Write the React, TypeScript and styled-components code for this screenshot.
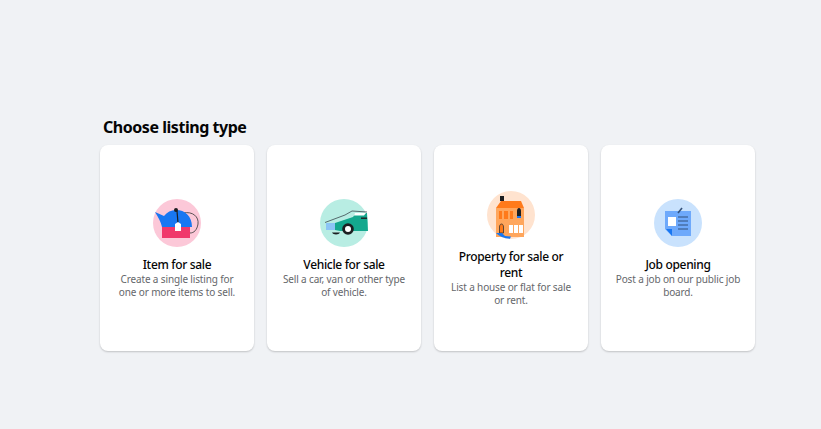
import { ReactNode } from "react";
import styled, { createGlobalStyle } from "styled-components";

const GlobalStyle = createGlobalStyle`
  html, body {
    margin: 0;
    padding: 0;
    background: #f0f2f5;
    font-family: "Noto Sans", "Open Sans", sans-serif;
  }
`;

const Page = styled.div`
  box-sizing: border-box;
  width: 821px;
  height: 429px;
  padding: 117px 0 0 100px;
  background: #f0f2f5;
  overflow: hidden;
`;

const Heading = styled.h1`
  margin: 0 0 7px 3px;
  font-size: 16px;
  line-height: 21px;
  font-weight: 700;
  letter-spacing: -0.46px;
  color: #050505;
`;

const Cards = styled.div`
  display: flex;
  gap: 13px;
`;

const Card = styled.div`
  box-sizing: border-box;
  width: 154px;
  height: 206px;
  padding: 2px 12px 0;
  display: flex;
  flex-direction: column;
  align-items: center;
  justify-content: center;
  text-align: center;
  background: #fff;
  border-radius: 8px;
  box-shadow: 0 1px 2px rgba(0, 0, 0, 0.2);
`;

const IconWrap = styled.div`
  width: 48px;
  height: 48px;
  margin-bottom: 10px;

  svg {
    display: block;
  }
`;

const Title = styled.div`
  max-width: 122px;
  font-size: 12px;
  line-height: 16px;
  font-weight: 500;
  letter-spacing: -0.33px;
  color: #050505;
`;

const Description = styled.div`
  margin-bottom: 1px;
  font-size: 10px;
  line-height: 13px;
  letter-spacing: -0.14px;
  color: #65676b;
`;

const TeapotIcon = () => (
  <svg width="48" height="48" viewBox="0 0 48 48">
    <circle cx="24" cy="24" r="24" fill="#fcc8d8" />
    <path d="M30 14 C40 12 46 18 45 25 C44 31 41 34 37 34" fill="none" stroke="#333" strokeWidth="0.8" />
    <path d="M2 13 L11 17 C14 13 18 11 23 11 C32 11 39 17 39 28 H9 C8 23 5 18 2 13 Z" fill="#1877f2" />
    <rect x="9" y="28" width="28" height="11" fill="#f0386b" />
    <circle cx="23" cy="11" r="2" fill="#1c1e21" />
    <path d="M24 12 L25 24" stroke="#1c1e21" strokeWidth="1.2" />
    <path d="M25 23 L28 25 V32 H22 V25 Z" fill="#fff" />
  </svg>
);

const CarIcon = () => (
  <svg width="48" height="48" viewBox="0 0 48 48">
    <circle cx="24" cy="24" r="24" fill="#b8ede3" />
    <path d="M15 24 L33 18 L36 14 H47 L48 32 H20 L15 31 Z" fill="#14a88e" />
    <path d="M5 23.5 L25 16 L32 12 L47 13" fill="none" stroke="#4a5a5f" strokeWidth="0.9" />
    <path d="M35 14 H46 L44 16.5 H34 Z" fill="#fff" />
    <path d="M6 24 L15 24 V31 H6 Z" fill="#8cc4f5" />
    <path d="M12 33.5 H20 C19 36 13 36 12 33.5 Z" fill="#1c1e21" />
    <circle cx="28" cy="30" r="5.8" fill="#1c1e21" />
    <circle cx="28" cy="30" r="3" fill="#fff" />
    <rect x="41" y="18.5" width="6" height="1.4" fill="#1c1e21" />
  </svg>
);

const HouseIcon = () => (
  <svg width="48" height="48" viewBox="0 0 48 48">
    <circle cx="24" cy="24" r="24" fill="#ffe3cf" />
    <rect x="13" y="5" width="4" height="5" fill="#1c1e21" />
    <rect x="9" y="17" width="28" height="29" fill="#ffa65c" />
    <path d="M14 10 H34 L37 17 H9 Z" fill="#ff7a1a" />
    <rect x="12" y="20" width="3" height="8" fill="#ff7a1a" />
    <rect x="17" y="20" width="4" height="8" fill="#ff7a1a" />
    <rect x="23" y="20" width="3" height="8" fill="#ff7a1a" />
    <path d="M30 27 V20 C30 16 34 16 34 20 V27 Z" fill="#1c1e21" />
    <rect x="30" y="25" width="4" height="2" fill="#1877f2" />
    <path d="M12.5 42 V36 C12.5 32 16.5 32 16.5 36 V42 Z" fill="#ff7a1a" stroke="#333" strokeWidth="0.8" />
    <rect x="22" y="34" width="4" height="8" fill="#fff" />
    <rect x="27" y="34" width="4" height="8" fill="#fff" />
    <rect x="32" y="34" width="4" height="8" fill="#fff" />
    <path d="M9 42 L15 42 L18 45 L24 45.5 L23 47.8 C17 47.5 12 45.5 9 42 Z" fill="#1877f2" />
  </svg>
);

const JobIcon = () => (
  <svg width="48" height="48" viewBox="0 0 48 48">
    <circle cx="24" cy="24" r="24" fill="#c9e2fd" />
    <path d="M11 12 H37 V37 H18 L11 30 Z" fill="#6ea9fb" />
    <path d="M12 30 H18 V37 Z" fill="#1877f2" />
    <rect x="14" y="18" width="8" height="9" fill="#fff" />
    <path d="M24 18 H34 M24 22 H34 M24 26 H34 M24 30 H34" stroke="#33517a" strokeWidth="1" />
    <path d="M24 14 L28 9" stroke="#33517a" strokeWidth="1.6" />
  </svg>
);

interface ListingType {
  title: string;
  description: string;
  icon: ReactNode;
}

const listingTypes: ListingType[] = [
  { title: "Item for sale", description: "Create a single listing for one or more items to sell.", icon: <TeapotIcon /> },
  { title: "Vehicle for sale", description: "Sell a car, van or other type of vehicle.", icon: <CarIcon /> },
  { title: "Property for sale or rent", description: "List a house or flat for sale or rent.", icon: <HouseIcon /> },
  { title: "Job opening", description: "Post a job on our public job board.", icon: <JobIcon /> },
];

const App = () => (
  <Page>
    <GlobalStyle />
    <Heading>Choose listing type</Heading>
    <Cards>
      {listingTypes.map((item) => (
        <Card key={item.title}>
          <IconWrap>{item.icon}</IconWrap>
          <Title>{item.title}</Title>
          <Description>{item.description}</Description>
        </Card>
      ))}
    </Cards>
  </Page>
);

export default App;
